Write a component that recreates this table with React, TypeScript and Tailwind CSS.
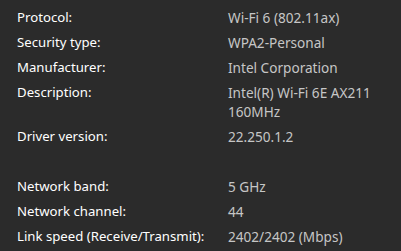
import React from "react";

const rows: { label: string; value: string[] }[] = [
  { label: "Protocol:", value: ["Wi-Fi 6 (802.11ax)"] },
  { label: "Security type:", value: ["WPA2-Personal"] },
  { label: "Manufacturer:", value: ["Intel Corporation"] },
  { label: "Description:", value: ["Intel(R) Wi-Fi 6E AX211", "160MHz"] },
  { label: "Driver version:", value: ["22.250.1.2"] },
  { label: "", value: [""] },
  { label: "Network band:", value: ["5 GHz"] },
  { label: "Network channel:", value: ["44"] },
  { label: "Link speed (Receive/Transmit):", value: ["2402/2402 (Mbps)"] },
];

export default function App() {
  return (
    <div
      className="w-[401px] h-[251px] overflow-hidden bg-[#2b2b2b] pl-[17px] pt-[8px] flex flex-col gap-[6px] leading-[19px]"
      style={{ fontFamily: '"Noto Sans", sans-serif' }}
    >
      {rows.map((r, i) => (
        <div key={i} className="flex min-h-[19px]">
          <div className="w-[211px] shrink-0 text-[13.2px] text-white">{r.label}</div>
          <div className="text-[13.6px] text-[#c6c6c6]">
            {r.value.map((v, j) => (
              <div key={j}>{v}</div>
            ))}
          </div>
        </div>
      ))}
    </div>
  );
}
